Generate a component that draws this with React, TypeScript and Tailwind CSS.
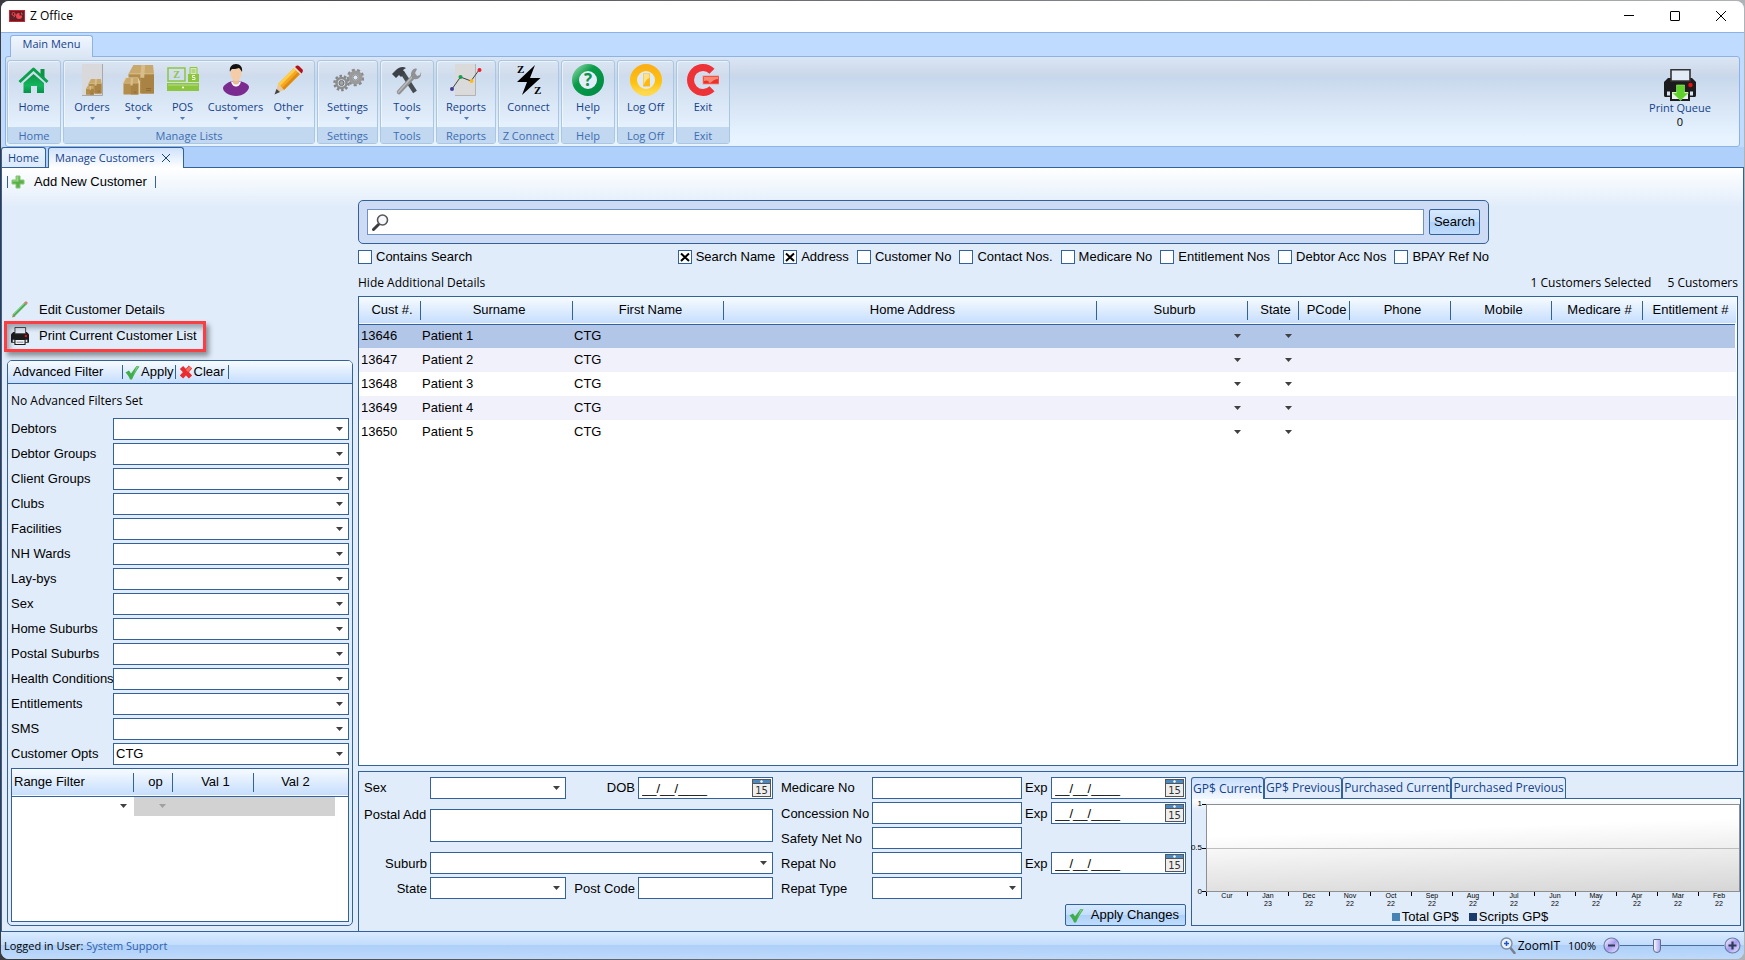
import { useState, type ReactNode } from "react";

const FILTERS = [
  "Debtors",
  "Debtor Groups",
  "Client Groups",
  "Clubs",
  "Facilities",
  "NH Wards",
  "Lay-bys",
  "Sex",
  "Home Suburbs",
  "Postal Suburbs",
  "Health Conditions",
  "Entitlements",
  "SMS",
  "Customer Opts",
];

const CUSTOMERS = [
  { id: "13646", surname: "Patient 1", firstName: "CTG" },
  { id: "13647", surname: "Patient 2", firstName: "CTG" },
  { id: "13648", surname: "Patient 3", firstName: "CTG" },
  { id: "13649", surname: "Patient 4", firstName: "CTG" },
  { id: "13650", surname: "Patient 5", firstName: "CTG" },
];

const COLUMNS = [
  { label: "Cust #.", width: "w-[62px]" },
  { label: "Surname", width: "w-[152px]" },
  { label: "First Name", width: "w-[151px]" },
  { label: "Home Address", width: "" },
  { label: "Suburb", width: "w-[151px]" },
  { label: "State", width: "w-[51px]" },
  { label: "PCode", width: "w-[51px]" },
  { label: "Phone", width: "w-[101px]" },
  { label: "Mobile", width: "w-[101px]" },
  { label: "Medicare #", width: "w-[91px]" },
  { label: "Entitlement #", width: "w-[93px]" },
];

const SEARCH_FIELDS = [
  { label: "Search Name", on: true },
  { label: "Address", on: true },
  { label: "Customer No", on: false },
  { label: "Contact Nos.", on: false },
  { label: "Medicare No", on: false },
  { label: "Entitlement Nos", on: false },
  { label: "Debtor Acc Nos", on: false },
  { label: "BPAY Ref No", on: false },
];

const MONTHS = [
  ["Cur", ""],
  ["Jan", "23"],
  ["Dec", "22"],
  ["Nov", "22"],
  ["Oct", "22"],
  ["Sep", "22"],
  ["Aug", "22"],
  ["Jul", "22"],
  ["Jun", "22"],
  ["May", "22"],
  ["Apr", "22"],
  ["Mar", "22"],
  ["Feb", "22"],
];

const CHART_TABS = ["GP$ Current", "GP$ Previous", "Purchased Current", "Purchased Previous"];

const uiFont = "font-['Open_Sans','Noto_Sans',sans-serif]";

export default function App() {
  const [selected, setSelected] = useState("13646");

  return (
    <div className="flex min-h-screen flex-col bg-linear-to-r from-[#3a3a40] to-[#b0b2b6] p-px font-['Liberation_Sans',Arial,sans-serif] text-[13px] leading-4 text-black">
      <div className="flex flex-1 flex-col overflow-hidden rounded-lg bg-[#bfdbff]">
        <TitleBar />
        <Ribbon />
        <DocumentTabs />
        <main className="flex flex-1 gap-[5px] border-x border-[#33619b] bg-[#e0ecfa] bg-[linear-gradient(#ffffff,#e0ecfa_40px)]">
          <SidePanel />
          <section className="flex min-w-0 flex-1 flex-col pt-8">
            <SearchArea />
            <div className={`flex h-[26px] items-center gap-4 pr-[5px] text-[12px] ${uiFont}`}>
              <button className="mr-auto">Hide Additional Details</button>
              <span>1 Customers Selected</span>
              <span>5 Customers</span>
            </div>
            <div className="mr-[5px] flex-1 border border-[#33619b] bg-white">
              <CustomerTable selected={selected} onSelect={setSelected} />
            </div>
            <DetailsPanel />
          </section>
        </main>
        <StatusBar />
      </div>
    </div>
  );
}

function TitleBar() {
  return (
    <header className="flex h-8 items-center border-b border-[#8db2e3] bg-white pb-0.5 pl-2">
      <svg width="16" height="12" viewBox="0 0 16 12" aria-hidden="true">
        <rect width="16" height="12" fill="#d3202f" />
        <rect x="1" y="1" width="14" height="10" fill="#5b2228" />
        <circle cx="4.500" cy="4" r="1.500" fill="none" stroke="#f0454f" />
        <path d="M6 4v2L4.500 7" fill="none" stroke="#f0454f" />
        <path d="M10.500 3a3 3 0 1 0 2.500 2.500h-2.500z" fill="#f0454f" />
        <path d="M12 2v2.500h2z" fill="#f0454f" />
      </svg>
      <h1 className={`ml-[5px] text-[12px] ${uiFont}`}>Z Office</h1>
      <div className="ml-auto flex self-stretch">
        <button aria-label="Minimize" className="flex w-[46px] items-center justify-center">
          <span className="h-px w-2.5 bg-black" />
        </button>
        <button aria-label="Maximize" className="flex w-[46px] items-center justify-center">
          <span className="size-2.5 rounded-[1px] border border-black" />
        </button>
        <button aria-label="Close" className="flex w-[46px] items-center justify-center">
          <svg width="10" height="10" viewBox="0 0 10 10" stroke="#000" aria-hidden="true">
            <path d="M0 0l10 10M10 0L0 10" />
          </svg>
        </button>
      </div>
    </header>
  );
}

/* ---------- ribbon ---------- */

function Ribbon() {
  return (
    <nav className={`px-1 pt-0.5 text-[11px] text-[#15428b] ${uiFont}`}>
      <div className="flex">
        <button className="relative z-10 -mb-px ml-[5px] h-[22px] w-[83px] rounded-t-[3px] border border-b-0 border-[#8db2e3] bg-linear-to-b from-[#eff6ff] to-[#dbe6f4] pb-1.5">
          Main Menu
        </button>
      </div>
      <div className="flex h-[91px] rounded-[3px] border border-[#8db2e3] bg-[linear-gradient(#dbe6f4,#cbd8ea_18px,#c8d8ec_20px,#e7f3ff_80px)] pt-[3px]">
        <div className="ml-px flex gap-0.5">
          <RibbonGroup label="Home" width="w-[54px]">
            <RibbonItem label="Home" width="w-12" icon={<HomeIcon />} />
          </RibbonGroup>
          <RibbonGroup label="Manage Lists" width="w-[252px]">
            <RibbonItem label="Orders" width="w-12" icon={<OrdersIcon />} menu />
            <RibbonItem label="Stock" width="w-[45px]" icon={<StockIcon />} menu />
            <RibbonItem label="POS" width="w-[43px]" icon={<PosIcon />} menu />
            <RibbonItem label="Customers" width="w-[63px]" icon={<PersonIcon />} menu />
            <RibbonItem label="Other" width="w-[43px]" icon={<PencilIcon />} menu />
          </RibbonGroup>
          <RibbonGroup label="Settings" width="w-[61px]">
            <RibbonItem label="Settings" width="w-14" icon={<GearsIcon />} menu />
          </RibbonGroup>
          <RibbonGroup label="Tools" width="w-[54px]">
            <RibbonItem label="Tools" width="w-12" icon={<ToolsIcon />} menu />
          </RibbonGroup>
          <RibbonGroup label="Reports" width="w-[60px]">
            <RibbonItem label="Reports" width="w-14" icon={<ReportsIcon />} menu />
          </RibbonGroup>
          <RibbonGroup label="Z Connect" width="w-[61px]">
            <RibbonItem label="Connect" width="w-14" icon={<ConnectIcon />} />
          </RibbonGroup>
          <RibbonGroup label="Help" width="w-[54px]">
            <RibbonItem label="Help" width="w-12" icon={<HelpIcon />} menu />
          </RibbonGroup>
          <RibbonGroup label="Log Off" width="w-[57px]">
            <RibbonItem label="Log Off" width="w-12" icon={<LogOffIcon />} />
          </RibbonGroup>
          <RibbonGroup label="Exit" width="w-[54px]">
            <RibbonItem label="Exit" width="w-12" icon={<ExitIcon />} />
          </RibbonGroup>
        </div>
        <button className="mr-[22px] ml-auto flex w-[74px] flex-col items-center pt-[9px]">
          <PrinterIcon size={32} arrow />
          <span className="h-[14px] leading-[14px]">Print Queue</span>
          <span className="h-[14px] leading-[14px] text-black">0</span>
        </button>
      </div>
    </nav>
  );
}

function RibbonGroup({ label, width, children }: { label: string; width: string; children: ReactNode }) {
  return (
    <div
      className={`flex h-[84px] flex-col rounded-[3px] border border-[#a9c6e3] bg-white/10 shadow-[inset_1px_1px_0_rgba(255,255,255,0.5)] ${width}`}
    >
      <div className="flex flex-1 justify-center pt-[3px]">{children}</div>
      <div className="flex h-4 items-center justify-center bg-[#c1d8f0] pt-0.5 text-[#3e6db0]">{label}</div>
    </div>
  );
}

function RibbonItem({ label, width, icon, menu }: { label: string; width: string; icon: ReactNode; menu?: boolean }) {
  return (
    <button className={`flex flex-col items-center ${width}`}>
      {icon}
      <span className="mt-[3px] h-4">{label}</span>
      {menu && <DownArrow className="mt-0.5 h-[3px] w-[5px] text-[#567db1]" />}
    </button>
  );
}

function DocumentTabs() {
  return (
    <div className={`flex h-[21px] items-end gap-0.5 border-b border-[#33619b] bg-[#afd0fa] text-[11px] text-[#15428b] ${uiFont}`}>
      <button className="h-5 w-[45px] rounded-t-[3px] border border-b-0 border-[#33619b] bg-linear-to-b from-[#e6f1fd] to-[#dbe9fb]">
        Home
      </button>
      <div className="-mb-px flex h-[21px] w-[136px] items-center gap-2 rounded-t-[3px] border border-b-0 border-[#33619b] bg-linear-to-b from-[#cfe2fb] to-white pl-1.5">
        <button>Manage Customers</button>
        <button aria-label="Close tab">
          <svg width="8" height="8" viewBox="0 0 8 8" stroke="#15428b" aria-hidden="true">
            <path d="M0 0l8 8M8 0L0 8" />
          </svg>
        </button>
      </div>
    </div>
  );
}

/* ---------- left side ---------- */

function SidePanel() {
  return (
    <aside className="flex w-[351px] shrink-0 flex-col pb-[5px] pl-[5px]">
      <div className="flex h-[27px] items-center">
        <span className="h-3 w-px bg-[#33619b]" />
        <button className="flex items-center gap-[9px] pl-[3px]">
          <PlusIcon />
          Add New Customer
        </button>
        <span className="ml-2 h-3 w-px bg-[#33619b]" />
      </div>
      <button className="mt-[102px] flex h-[26px] items-center gap-2.5 self-start pl-1">
        <ThinPencilIcon />
        Edit Customer Details
      </button>
      <div className="relative self-start">
        <button className="flex h-[26px] items-center gap-2.5 pr-1.5 pl-1">
          <PrinterIcon size={18} />
          Print Current Customer List
        </button>
        <span className="pointer-events-none absolute -inset-x-[3px] -top-0.5 -bottom-[3px] border-[3px] border-[#fb3e42] shadow-[3px_4px_5px_rgba(0,0,0,0.4),inset_3px_4px_5px_rgba(0,0,0,0.3)]" />
      </div>
      <div className="mt-[11px] flex flex-1 flex-col overflow-hidden rounded-[5px] border border-[#33619b]">
        <div className="flex h-[23px] items-center border-b border-[#33619b] bg-linear-to-b from-[#f7fbff] to-[#c6defd] pl-[5px]">
          <h2 className="w-[109px]">Advanced Filter</h2>
          <span className="h-3.5 w-px bg-[#33619b]" />
          <button className="flex items-center gap-px pl-0.5">
            <CheckIcon />
            Apply
          </button>
          <span className="ml-px h-3.5 w-px bg-[#33619b]" />
          <button className="flex items-center gap-px pl-[3px]">
            <CrossIcon />
            Clear
          </button>
          <span className="ml-[3px] h-3.5 w-px bg-[#33619b]" />
        </div>
        <div className="flex flex-1 flex-col px-[3px] pb-[3px]">
          <p className={`flex h-[34px] items-center text-[12px] ${uiFont}`}>No Advanced Filters Set</p>
          <div className="flex flex-col gap-[3px]">
            {FILTERS.map((name) => (
              <label key={name} className="flex h-[22px] items-center">
                <span className="w-[102px] shrink-0 whitespace-nowrap">{name}</span>
                <Dropdown className="flex-1" value={name === "Customer Opts" ? "CTG" : ""} />
              </label>
            ))}
          </div>
          <div className="mt-[3px] flex-1 border border-[#33619b] bg-white">
            <RangeTable />
          </div>
        </div>
      </div>
    </aside>
  );
}

function RangeTable() {
  return (
    <table className="w-full table-fixed border-collapse">
      <thead>
        <tr className="h-[27px] border-b border-[#33619b] bg-linear-to-b from-[#f7fbff] to-[#c6defd]">
          <HeadCell label="Range Filter" width="w-[122px]" left />
          <HeadCell label="op" width="w-[39px]" />
          <HeadCell label="Val 1" width="w-[81px]" />
          <HeadCell label="Val 2" width="w-[81px]" last />
          <th />
        </tr>
      </thead>
      <tbody>
        <tr className="h-5">
          <td className="pr-[7px]">
            <DownArrow className="ml-auto h-1 w-[7px] text-[#404040]" />
          </td>
          <td className="bg-[#d2d2d2] pr-[7px]">
            <DownArrow className="ml-auto h-1 w-[7px] text-[#a0a0a0]" />
          </td>
          <td className="bg-[#d2d2d2]" />
          <td className="bg-[#d2d2d2]" />
          <td />
        </tr>
      </tbody>
    </table>
  );
}

function HeadCell({ label, width, left, last }: { label: string; width: string; left?: boolean; last?: boolean }) {
  return (
    <th className={`p-0 font-normal ${width}`}>
      <div
        className={`flex h-[19px] items-center whitespace-nowrap border-[#33619b] ${left ? "pl-0.5" : "justify-center"} ${last ? "pl-0.5" : "border-r"} ${left || last ? "" : "pl-[5px]"}`}
      >
        {label}
      </div>
    </th>
  );
}

/* ---------- search and list ---------- */

function SearchArea() {
  return (
    <div className="mr-[254px]">
      <form
        className="flex h-11 items-center gap-[5px] rounded-[5px] border border-[#33619b] bg-[#cddbf4] px-2"
        onSubmit={(e) => e.preventDefault()}
      >
        <div className="flex h-[26px] flex-1 items-center border border-[#6f92c4] bg-white pl-1">
          <svg width="17" height="17" viewBox="0 0 17 17" fill="none" aria-hidden="true">
            <path d="M1.500 15.500L6.500 10.500" stroke="#3c3c3c" strokeWidth="3" strokeLinecap="round" />
            <circle cx="10.500" cy="6" r="5" fill="#f6f8fb" stroke="#555" strokeWidth="1.600" />
          </svg>
          <input aria-label="Search customers" className="h-full min-w-0 flex-1 px-1 outline-none" />
        </div>
        <button className="h-[26px] w-[51px] rounded-[2px] border border-[#33619b] bg-[linear-gradient(#d7e9fd,#c4defc_48%,#aed0f8_50%,#bfdcfc)]">
          Search
        </button>
      </form>
      <div className="flex h-[26px] items-center gap-2">
        <div className="mr-auto">
          <CheckBox label="Contains Search" />
        </div>
        {SEARCH_FIELDS.map((field) => (
          <CheckBox key={field.label} label={field.label} on={field.on} />
        ))}
      </div>
    </div>
  );
}

function CheckBox({ label, on = false }: { label: string; on?: boolean }) {
  return (
    <label className="flex items-center gap-1 whitespace-nowrap">
      <span className="grid size-3.5">
        <input
          type="checkbox"
          defaultChecked={on}
          className="peer col-start-1 row-start-1 size-3.5 appearance-none border border-[#33619b] bg-white"
        />
        <svg
          viewBox="0 0 14 14"
          className="pointer-events-none invisible col-start-1 row-start-1 size-3.5 peer-checked:visible"
          stroke="#000"
          strokeWidth="2"
          aria-hidden="true"
        >
          <path d="M3 3.500l8 7.500M11 3.500L3 11" />
        </svg>
      </span>
      {label}
    </label>
  );
}

function CustomerTable({ selected, onSelect }: { selected: string; onSelect: (id: string) => void }) {
  return (
    <table className="w-full table-fixed border-collapse">
      <thead>
        <tr className="h-[27px] border-b border-[#33619b] bg-linear-to-b from-[#f7fbff] to-[#c6defd]">
          {COLUMNS.map((col, i) => (
            <HeadCell key={col.label} label={col.label} width={col.width} last={i === COLUMNS.length - 1} />
          ))}
        </tr>
      </thead>
      <tbody>
        {CUSTOMERS.map((c) => (
          <tr
            key={c.id}
            onClick={() => onSelect(c.id)}
            className={`h-6 ${c.id === selected ? "bg-[#b2c6e8]" : "even:bg-[#f1f1fb]"}`}
          >
            <td className="pl-0.5">{c.id}</td>
            <td className="pl-px">{c.surname}</td>
            <td className="pl-px">{c.firstName}</td>
            <td />
            <td className="pr-[7px]">
              <DownArrow className="ml-auto h-1 w-[7px] text-[#404040]" />
            </td>
            <td className="pr-[7px]">
              <DownArrow className="ml-auto h-1 w-[7px] text-[#404040]" />
            </td>
            <td />
            <td />
            <td />
            <td />
            <td className={c.id === selected ? "border-r-2 border-white" : ""} />
          </tr>
        ))}
      </tbody>
    </table>
  );
}

/* ---------- details ---------- */

function DetailsPanel() {
  return (
    <div className="mt-[5px] flex h-40 border-t border-l border-[#33619b] pt-[5px] pr-0.5 pl-[5px]">
      <div className="grid grid-cols-[66px_136px_72px_135px] content-start items-center">
        <label htmlFor="sex">Sex</label>
        <Dropdown id="sex" />
        <label htmlFor="dob" className="pr-[3px] text-right">DOB</label>
        <DateField id="dob" />
        <label htmlFor="postal" className="mt-2 self-start whitespace-nowrap">Postal Add</label>
        <textarea
          id="postal"
          className="col-span-3 my-2.5 block h-[33px] resize-none border border-[#33619b] bg-white px-1 outline-none"
        />
        <label htmlFor="suburb" className="pt-0.5 pr-[3px] text-right">Suburb</label>
        <Dropdown id="suburb" className="col-span-3" />
        <label htmlFor="state" className="mt-[3px] pt-0.5 pr-[3px] text-right">State</label>
        <Dropdown id="state" className="mt-[3px]" />
        <label htmlFor="postcode" className="mt-[3px] pt-0.5 pr-[3px] text-right whitespace-nowrap">Post Code</label>
        <TextField id="postcode" className="mt-[3px]" />
      </div>

      <div className="ml-2 flex flex-col items-end">
        <div className="grid grid-cols-[91px_150px_29px_135px] content-start items-center gap-y-[3px]">
          <label htmlFor="medicare">Medicare No</label>
          <TextField id="medicare" />
          <label htmlFor="medicare-exp" className="pl-[3px]">Exp</label>
          <DateField id="medicare-exp" />
          <label htmlFor="concession" className="pt-0.5">Concession No</label>
          <TextField id="concession" />
          <label htmlFor="concession-exp" className="pt-0.5 pl-[3px]">Exp</label>
          <DateField id="concession-exp" />
          <label htmlFor="safety" className="pt-0.5">Safety Net No</label>
          <TextField id="safety" />
          <span className="col-span-2" />
          <label htmlFor="repat" className="pt-0.5">Repat No</label>
          <TextField id="repat" />
          <label htmlFor="repat-exp" className="pt-0.5 pl-[3px]">Exp</label>
          <DateField id="repat-exp" />
          <label htmlFor="repat-type" className="pt-0.5">Repat Type</label>
          <Dropdown id="repat-type" />
        </div>
        <button className="mt-[5px] flex h-[22px] items-center gap-[7px] rounded-[2px] border border-[#33619b] bg-[linear-gradient(#d7e9fd,#c4defc_48%,#aed0f8_50%,#bfdcfc)] pr-1.5 pl-[3px]">
          <CheckIcon />
          Apply Changes
        </button>
      </div>

      <GpChart />
    </div>
  );
}

function GpChart() {
  const [tab, setTab] = useState(CHART_TABS[0]);

  return (
    <div className="ml-[5px] flex min-w-0 flex-1 flex-col pb-[5px]">
      <div className={`flex text-[12px] text-[#15428b] ${uiFont}`} role="tablist">
        {CHART_TABS.map((name) => (
          <button
            key={name}
            role="tab"
            aria-selected={tab === name}
            onClick={() => setTab(name)}
            className={`rounded-t-[3px] border border-b-0 border-[#33619b] px-px whitespace-nowrap ${
              tab === name
                ? "relative z-10 -mb-px h-[22px] bg-linear-to-b from-[#c9defa] to-[#f4f9ff]"
                : "h-[21px] bg-[#e0ecfa]"
            }`}
          >
            {name}
          </button>
        ))}
      </div>
      <div className="flex flex-1 flex-col border border-[#33619b] bg-[linear-gradient(#ffffff,#e0ecfa_12px)]">
        <div className="mt-[5px] flex h-[88px] text-[8px] leading-[8px]">
          <div className="-my-1 flex w-2.5 flex-col items-end justify-between">
            <span>1</span>
            <span>0.5</span>
            <span>0</span>
          </div>
          <div className="flex w-1 flex-col justify-between">
            <span className="h-px bg-black" />
            <span className="h-px bg-black" />
            <span className="h-px bg-black" />
          </div>
          <div className="flex flex-1 flex-col border border-[#8f8f8f] bg-[linear-gradient(178deg,#ffffff_30%,#d6d6d6)]">
            <div className="flex-1 border-b border-[#bdbdbd]" />
            <div className="flex-1" />
          </div>
        </div>
        <div className="ml-3.5 flex border-r border-transparent text-[7px] leading-[8px]">
          {MONTHS.map(([month, year]) => (
            <div key={month} className="flex flex-1">
              <span className="h-1 w-px bg-black" />
              <span className="flex-1 text-center">
                {month}
                <br />
                {year}
              </span>
            </div>
          ))}
        </div>
        <div className="flex flex-1 items-center justify-center gap-2.5 pl-2">
          <span className="flex items-center gap-0.5">
            <span className="size-2 bg-[#4682b4]" />
            Total GP$
          </span>
          <span className="flex items-center gap-0.5">
            <span className="size-2 bg-[#1b3a6b]" />
            Scripts GP$
          </span>
        </div>
      </div>
    </div>
  );
}

function Dropdown({ id, value = "", className = "" }: { id?: string; value?: string; className?: string }) {
  return (
    <span className={`grid items-center ${className}`}>
      <select
        id={id}
        defaultValue={value}
        className="col-start-1 row-start-1 h-[22px] w-full appearance-none border border-[#33619b] bg-white pr-4 pl-0.5 outline-none"
      >
        <option value={value}>{value}</option>
      </select>
      <DownArrow className="pointer-events-none col-start-1 row-start-1 mr-[6px] h-1 w-[7px] justify-self-end text-[#404040]" />
    </span>
  );
}

function TextField({ id, className = "" }: { id: string; className?: string }) {
  return (
    <input id={id} className={`block h-[22px] min-w-0 border border-[#33619b] bg-white px-1 outline-none ${className}`} />
  );
}

function DateField({ id }: { id: string }) {
  return (
    <span className="flex h-[22px] items-center border border-[#33619b] bg-white pr-px">
      <input id={id} defaultValue="__/__/____" className="h-full min-w-0 flex-1 pl-[3px] outline-none" />
      <button aria-label="Pick a date">
        <svg width="19" height="18" viewBox="0 0 19 18" className="block" aria-hidden="true">
          <rect x="0.500" y="0.500" width="18" height="17" fill="#eeeeee" stroke="#555" />
          <rect x="1" y="1" width="17" height="3" fill="#4a8ac4" />
          <path d="M1 4.500h17" stroke="#555" />
          <circle cx="9.500" cy="2.500" r="1.200" fill="#fff" />
          <text x="9.500" y="15" textAnchor="middle" fontSize="10" fontFamily="DejaVu Sans" fill="#333">
            15
          </text>
        </svg>
      </button>
    </span>
  );
}

/* ---------- status bar ---------- */

function StatusBar() {
  return (
    <footer
      className={`flex h-7 items-center border-t border-[#33619b] bg-[linear-gradient(#d9ebff,#c2dcfb_48%,#aecff8_50%,#bedafb)] pr-[3px] pl-[3px] text-[12px] ${uiFont}`}
    >
      <span className="text-[11px]">
        Logged in User: <span className="text-[#2f5fae]">System Support</span>
      </span>
      <svg width="16" height="17" viewBox="0 0 16 17" className="ml-auto" aria-hidden="true">
        <path d="M10.500 11l4 5" stroke="#77808c" strokeWidth="2.500" strokeLinecap="round" />
        <circle cx="6.500" cy="6.500" r="5.500" fill="#e9f3ff" stroke="#7d8ea6" strokeWidth="1.400" />
        <path d="M6.500 4v5M4 6.500h5" stroke="#2456c4" strokeWidth="1.500" />
      </svg>
      <label htmlFor="zoom" className="mr-2 ml-0.5">ZoomIT</label>
      <output className="mr-[7px] text-[11px]">100%</output>
      <button aria-label="Zoom out">
        <ZoomButton />
      </button>
      <input
        id="zoom"
        type="range"
        defaultValue={34}
        className="h-3.5 w-[104px] appearance-none bg-[linear-gradient(#4a6f9f,#4a6f9f)] bg-[length:100%_1px] bg-center bg-no-repeat [&::-webkit-slider-thumb]:h-3.5 [&::-webkit-slider-thumb]:w-2 [&::-webkit-slider-thumb]:appearance-none [&::-webkit-slider-thumb]:rounded-t-[1px] [&::-webkit-slider-thumb]:rounded-b-[4px] [&::-webkit-slider-thumb]:border [&::-webkit-slider-thumb]:border-[#5f6f88] [&::-webkit-slider-thumb]:bg-linear-to-r [&::-webkit-slider-thumb]:from-[#f4f4ff] [&::-webkit-slider-thumb]:to-[#b0a5ee]"
      />
      <button aria-label="Zoom in">
        <ZoomButton plus />
      </button>
    </footer>
  );
}

function ZoomButton({ plus }: { plus?: boolean }) {
  return (
    <svg width="17" height="17" viewBox="0 0 17 17" className="block" aria-hidden="true">
      <defs>
        <linearGradient id="zoomBall" x1="0" y1="0" x2="1" y2="1">
          <stop offset="0" stopColor="#ffffff" />
          <stop offset="0.5" stopColor="#a99df2" />
          <stop offset="1" stopColor="#f0edff" />
        </linearGradient>
      </defs>
      <circle cx="8.500" cy="8.500" r="7.500" fill="url(#zoomBall)" stroke="#6c7fa6" strokeWidth="1.200" />
      <path d={plus ? "M4.500 8.500h8M8.500 4.500v8" : "M5 8.500h7"} stroke="#2f3a55" strokeWidth="2.200" />
    </svg>
  );
}

/* ---------- icons ---------- */

function DownArrow({ className }: { className: string }) {
  return (
    <svg viewBox="0 0 7 4" className={className} fill="currentColor" preserveAspectRatio="none" aria-hidden="true">
      <path d="M0 0h7L3.500 4z" />
    </svg>
  );
}

function HomeIcon() {
  return (
    <svg width="32" height="32" viewBox="0 0 32 32" aria-hidden="true">
      <defs>
        <linearGradient id="roof" x1="0" y1="0" x2="0" y2="1">
          <stop offset="0" stopColor="#0b9444" />
          <stop offset="0.6" stopColor="#14b45c" />
          <stop offset="1" stopColor="#04934a" />
        </linearGradient>
      </defs>
      <path d="M5.500 19L15.500 10l10.500 9v10h-7v-7h-6v7h-7.500z" fill="url(#roof)" />
      <path d="M1.500 18L15.500 5l14 13" fill="none" stroke="#0ba04c" strokeWidth="3" strokeLinejoin="round" />
      <path d="M22.500 5h4v9l-4-3.500z" fill="#0b9444" />
    </svg>
  );
}

function Box({ x, y, s }: { x: number; y: number; s: number }) {
  return (
    <g transform={`translate(${x} ${y}) scale(${s})`}>
      <path d="M5 0h20l1 9H0z" fill="#c9a86c" />
      <path d="M0 9h26v20H0z" fill="#b38d4c" />
      <path d="M13 9h13v20H13z" fill="#a98344" />
      <path d="M13 0h4l-1 13h-4z" fill="#d8bd8a" />
      <path d="M0 9h26" stroke="#d9bf8c" />
      <path d="M18 24h5M18 26h5" stroke="#8d6a31" />
    </g>
  );
}

function OrdersIcon() {
  return (
    <svg width="32" height="32" viewBox="0 0 32 32" aria-hidden="true">
      <rect x="6" y="0" width="21" height="32" fill="#d9d9dc" />
      <path d="M26.500 0v31.500H6" fill="none" stroke="#a9a9ab" />
      <Box x={12.500} y={15} s={0.500} />
      <Box x={10} y={22} s={0.300} />
    </svg>
  );
}

function StockIcon() {
  return (
    <svg width="32" height="32" viewBox="0 0 32 32" aria-hidden="true">
      <Box x={5.500} y={1} s={0.980} />
      <path d="M2 13.500h13l2 4V30H.500V17.500z" fill="#e3d0a6" />
      <Box x={0.500} y={14} s={0.570} />
    </svg>
  );
}

function PosIcon() {
  return (
    <svg width="32" height="32" viewBox="0 0 32 32" aria-hidden="true">
      <rect x="1" y="4" width="17" height="13" fill="none" stroke="#8cc63f" strokeWidth="1.500" />
      <text x="9.500" y="14" textAnchor="middle" fontSize="10" fontWeight="bold" fontFamily="Liberation Serif" fill="#8cc63f">
        Z
      </text>
      <path d="M23 3.500h7v7h-7z" fill="#d7eab9" stroke="#8cc63f" />
      <path d="M24.500 6h4M24.500 8h4" stroke="#8cc63f" />
      <rect x="21" y="10" width="11" height="8" fill="#8cc63f" />
      <path d="M28 11.500h-2.500v2H28v2h-3" fill="none" stroke="#eef7e0" />
      <rect x="0" y="19" width="32" height="8" fill="#8cc63f" />
      <path d="M1 21h30" stroke="#c5e29a" strokeWidth="0.800" />
      <circle cx="16" cy="23.500" r="1" fill="#fff" />
    </svg>
  );
}

function PersonIcon() {
  return (
    <svg width="32" height="32" viewBox="0 0 32 32" aria-hidden="true">
      <path d="M3 24c0-3 6-6 9-7h8c3 1 9 3 9 6 0 4-6 9-13 9S3 28 3 24z" fill="#7b2a90" />
      <path d="M11 17.500h10c-1 4-3 5-5 5s-4-1-5-5z" fill="#fff" />
      <path d="M13 14h6v5c-1 2-5 2-6 0z" fill="#e8bb94" />
      <ellipse cx="16" cy="9.500" rx="5.500" ry="7.500" fill="#f4cda8" />
      <path d="M10 8c-1-5 2-8 6-8s7 3 6 8c-1-2-2-3-3-4-2 1-6 1-7 1-1 1-2 2-2 3z" fill="#121212" />
    </svg>
  );
}

function PencilIcon() {
  return (
    <svg width="32" height="32" viewBox="0 0 32 32" aria-hidden="true">
      <path d="M5 20L21 4l6 6-16 16z" fill="#f5a623" />
      <path d="M5 20L21 4l2 2L7 22z" fill="#ffcf4a" />
      <path d="M9 24L25 8l2 2-16 16z" fill="#e08a0e" />
      <path d="M21 4l2-2 6 6-2 2z" fill="#f5e7d4" />
      <path d="M22 3c1-1.500 3-2 4-1l3.500 3.500c1 1 0 3-1 4z" fill="#b3121d" />
      <path d="M5 20l6 6-8.500 3.500z" fill="#e9c79c" />
      <path d="M3.500 25l3.500 3-5.500 2.500z" fill="#444" />
    </svg>
  );
}

function GearsIcon() {
  return (
    <svg width="32" height="32" viewBox="0 0 32 32" fill="none" aria-hidden="true">
      <circle cx="9.500" cy="19" r="7" stroke="#858585" strokeWidth="2.500" strokeDasharray="2.500 1.900" />
      <circle cx="9.500" cy="19" r="5" stroke="#8d8d8d" strokeWidth="2.500" />
      <circle cx="9.500" cy="19" r="2.500" fill="#a5a5a5" stroke="#6e6e6e" />
      <circle cx="23.500" cy="13.500" r="7.500" stroke="#8a8a8a" strokeWidth="2.500" strokeDasharray="3 2.240" />
      <circle cx="23.500" cy="13.500" r="5" stroke="#9a9a9a" strokeWidth="4" />
      <circle cx="23.500" cy="13.500" r="2.500" fill="#dfe8f4" stroke="#777" strokeWidth="0.800" />
    </svg>
  );
}

function ToolsIcon() {
  return (
    <svg width="32" height="32" viewBox="0 0 32 32" fill="none" aria-hidden="true">
      <path d="M11 8l13 20" stroke="#454c52" strokeWidth="4.500" />
      <path d="M1 10l4-4c3-3 7-4 10-2l-3 2 2 3-4 4-2-2-3 3z" fill="#3b4146" />
      <path d="M8 28L23 12" stroke="#8f9193" strokeWidth="4.500" strokeLinecap="round" />
      <path d="M7 28.500L21 13" stroke="#b9bbbd" strokeWidth="1.500" />
      <path d="M30 8c1 5-3 8-7 7-3-1-4-5-2-8 1-2 3-3 5-2l-2 4 2 3 3-1z" fill="#8f9193" />
    </svg>
  );
}

function ReportsIcon() {
  return (
    <svg width="32" height="32" viewBox="0 0 32 32" aria-hidden="true">
      <rect x="5" y="0" width="21" height="32" fill="#dadadb" />
      <path d="M25.500 0v31.500H5" fill="none" stroke="#b3b3b4" />
      <path d="M2 25l8.500-12L21 17l8-11" fill="none" stroke="#444" />
      <circle cx="2" cy="25" r="2" fill="#4b3b8f" />
      <circle cx="10.500" cy="13" r="2" fill="#12a14b" />
      <circle cx="21.500" cy="17" r="2" fill="#fdb913" />
      <circle cx="29.500" cy="6" r="2" fill="#ed1c24" />
    </svg>
  );
}

function ConnectIcon() {
  return (
    <svg width="32" height="32" viewBox="0 0 32 32" className="overflow-visible" aria-hidden="true">
      <path d="M22 1L4 18h10L9 31l18.500-17H17z" fill="#000" />
      <text x="4" y="9" fontSize="11" fontWeight="bold" fontFamily="Liberation Serif">
        Z
      </text>
      <text x="21" y="30" fontSize="11" fontWeight="bold" fontFamily="Liberation Serif">
        Z
      </text>
    </svg>
  );
}

function HelpIcon() {
  return (
    <svg width="32" height="32" viewBox="0 0 32 32" aria-hidden="true">
      <defs>
        <linearGradient id="helpRing" x1="0" y1="0" x2="1" y2="1">
          <stop offset="0" stopColor="#7ccf9b" />
          <stop offset="0.35" stopColor="#0a9c49" />
          <stop offset="1" stopColor="#008c45" />
        </linearGradient>
      </defs>
      <circle cx="16" cy="16" r="12.500" fill="#e4eefa" stroke="url(#helpRing)" strokeWidth="7" />
      <text x="16" y="22" textAnchor="middle" fontSize="17" fontWeight="bold" fontFamily="Open Sans" fill="#0a9248">
        ?
      </text>
    </svg>
  );
}

function LogOffIcon() {
  return (
    <svg width="32" height="32" viewBox="0 0 32 32" aria-hidden="true">
      <defs>
        <linearGradient id="logRing" x1="0" y1="0" x2="0" y2="1">
          <stop offset="0" stopColor="#fbb116" />
          <stop offset="0.6" stopColor="#fec20e" />
          <stop offset="1" stopColor="#ffd84d" />
        </linearGradient>
      </defs>
      <circle cx="16" cy="16" r="12.500" fill="#dfeaf8" stroke="url(#logRing)" strokeWidth="7" />
      <rect x="13" y="9.500" width="7" height="13" fill="#fdb913" />
      <path d="M13.500 10h6v4c-3 1-5 4-6 8z" fill="#fde28a" />
    </svg>
  );
}

function ExitIcon() {
  return (
    <svg width="32" height="32" viewBox="0 0 32 32" aria-hidden="true">
      <path d="M25 7.300A12.500 12.500 0 1 0 25 24.700" fill="none" stroke="#ee3338" strokeWidth="7" />
      <rect x="16" y="12" width="16" height="8" fill="#ee2f2c" stroke="#f58a7a" strokeWidth="0.800" />
      <path d="M17 13h14v2c-5 0-6 4-9 4 0-3-3-3-5-2z" fill="#f58a72" />
    </svg>
  );
}

function PrinterIcon({ size, arrow }: { size: number; arrow?: boolean }) {
  return (
    <svg width={size} height={size} viewBox="0 0 32 32" aria-hidden="true">
      <path d="M4 9h24l4 4v13c0 2-1 2-2 2H2c-1 0-2 0-2-2V13z" fill="#1c1c1e" />
      <path d="M7 .800h19V12H7z" fill="#e3ebf6" stroke="#333" strokeWidth="1.600" />
      <path d="M3 22.500h4v4H3zM25 22.500h4v4h-4z" fill="#d7e4f3" />
      <path d="M7 22h18v9H7z" fill="#eef2f7" stroke="#1c1c1e" strokeWidth="2" />
      <circle cx="26.500" cy="16" r="2.200" fill="#f20d0d" />
      {arrow ? (
        <path d="M12.500 16h8v8h4l-8 7.500-8-7.500h4z" fill="#5fd02c" stroke="#a5eb74" strokeWidth="0.600" />
      ) : (
        <path d="M10 27h12" stroke="#777" strokeWidth="1.500" />
      )}
    </svg>
  );
}

function PlusIcon() {
  return (
    <svg width="14" height="14" viewBox="0 0 14 14" aria-hidden="true">
      <path d="M5 1h4v4h4v4H9v4H5V9H1V5h4z" fill="#5cb04a" stroke="#86c878" strokeLinejoin="round" />
      <path d="M5.500 1.500h2v5h-6v-1h4z" fill="#9bd68b" />
    </svg>
  );
}

function ThinPencilIcon() {
  return (
    <svg width="18" height="18" viewBox="0 0 18 18" aria-hidden="true">
      <path d="M2.500 14.500L15 2" stroke="#4fae54" strokeWidth="2.800" />
      <path d="M2 14L14.500 1.500" stroke="#8fd490" strokeWidth="0.800" />
      <path d="M14 3l2-2" stroke="#c98374" strokeWidth="2.800" />
      <path d="M1 16.500l1-3.500 2.500 2.500z" fill="#a08a5c" />
    </svg>
  );
}

function CheckIcon() {
  return (
    <svg width="15" height="15" viewBox="0 0 15 15" aria-hidden="true">
      <path d="M.500 7.500l3.500-2 2 3L11.500 1l3 .500C11.500 5 9 10 7 14.500H5C4 11.500 2.500 9.500.500 7.500z" fill="#3fae49" />
      <path d="M11.500 1.500l2 .300C11 5 9 8.500 7.500 12z" fill="#7fd083" />
    </svg>
  );
}

function CrossIcon() {
  return (
    <svg width="14" height="14" viewBox="0 0 14 14" aria-hidden="true">
      <path d="M2.500 2.500l9 9.500M11.500 2L2.500 12" stroke="#ea2b31" strokeWidth="4.500" />
      <path d="M11.500 2L8 6" stroke="#f4715f" strokeWidth="3" />
    </svg>
  );
}
